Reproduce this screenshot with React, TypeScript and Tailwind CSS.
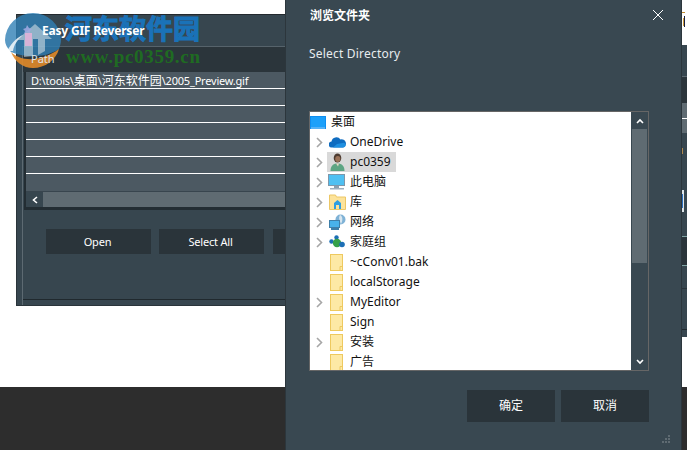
import React from "react";

const cjk = "font-['Noto_Sans','Noto_Sans_CJK_SC',sans-serif]";

function Chevron({ show }: { show: boolean }) {
  return (
    <span className="flex w-[16px] shrink-0 justify-center">
      {show && (
        <svg width="7" height="11" viewBox="0 0 7 11" fill="none">
          <path d="M1 1l4.5 4.5L1 10" stroke="#a6a6a6" strokeWidth="1.6" />
        </svg>
      )}
    </span>
  );
}

function FolderIcon() {
  return (
    <svg width="14" height="17" viewBox="0 0 14 17">
      <rect x="0.5" y="0.5" width="12" height="16" fill="#fde9a5" stroke="#eec95f" />
      <path d="M10 16.5v-4h3" fill="none" stroke="#eec95f" />
    </svg>
  );
}

function CloudIcon() {
  return (
    <svg width="17" height="12" viewBox="0 0 17 12">
      <path d="M3 11.5a3 3 0 0 1-.5-6A5 5 0 0 1 11.500 3.500a3.800 3.800 0 0 1 2.500 8z" fill="#0f6cc0" />
      <path d="M4 11.500h10.500a2.400 2.400 0 0 0 .5-4.700L8 8z" fill="#1f8fe0" />
    </svg>
  );
}

function UserIcon() {
  return (
    <svg width="15" height="18" viewBox="0 0 15 18">
      <ellipse cx="7.500" cy="5" rx="3.800" ry="4.500" fill="#4d3b30" />
      <ellipse cx="7.800" cy="6" rx="2.600" ry="3" fill="#9a7258" />
      <path d="M0.500 18c0-5 2.500-7.500 7-7.500s7 2.500 7 7.500z" fill="#5da583" />
      <path d="M6 10.500h3l-1 3z" fill="#e9d8c6" />
    </svg>
  );
}

function MonitorIcon() {
  return (
    <svg width="18" height="16" viewBox="0 0 18 16">
      <rect x="0.500" y="0.500" width="16" height="11" fill="#4fc0f2" stroke="#7f97aa" />
      <rect x="6" y="12" width="5" height="2" fill="#8ba0b0" />
      <rect x="2" y="14" width="14" height="1.500" fill="#9db0c0" />
    </svg>
  );
}

function LibraryIcon() {
  return (
    <svg width="17" height="16" viewBox="0 0 17 16">
      <path d="M0.500 1h6l1 2h9v12.500H.5z" fill="#fde39a" stroke="#ecc766" />
      <path d="M5 9l3.500-3L12 9v6H5z" fill="#2f9fe2" />
      <rect x="7" y="11" width="3" height="4" fill="#fde39a" />
    </svg>
  );
}

function NetworkIcon() {
  return (
    <svg width="17" height="17" viewBox="0 0 17 17">
      <circle cx="11.500" cy="5.500" r="5" fill="#7fb2d6" />
      <path d="M11 1c3 1 3 6 1 9-1-3-3-6-1-9z" fill="#d8e6ef" />
      <rect x="0.500" y="6.500" width="10" height="7" fill="#49b2ea" stroke="#3f7fa8" />
      <rect x="2" y="14" width="8" height="2" fill="#3f7fa8" />
    </svg>
  );
}

function HomegroupIcon() {
  return (
    <svg width="16" height="14" viewBox="0 0 16 14">
      <circle cx="2.500" cy="6.500" r="2.200" fill="#1d6fb5" />
      <circle cx="7.500" cy="2.500" r="2.200" fill="#1d6fb5" />
      <circle cx="8" cy="8" r="4.200" fill="#35a04a" />
      <circle cx="13" cy="9.500" r="2.800" fill="#1d6fb5" />
    </svg>
  );
}

function DesktopIcon() {
  return (
    <svg width="16" height="13" viewBox="0 0 16 13">
      <rect width="16" height="13" fill="#0f8ef0" />
      <rect x="1" y="1" width="14" height="10" fill="#1ca0fa" />
      <rect x="1" y="11.500" width="14" height="1" fill="#9fd6fb" />
    </svg>
  );
}

const tree = [
  { icon: <CloudIcon />, label: "OneDrive", arrow: true },
  { icon: <UserIcon />, label: "pc0359", arrow: true, selected: true },
  { icon: <MonitorIcon />, label: "此电脑", arrow: true },
  { icon: <LibraryIcon />, label: "库", arrow: true },
  { icon: <NetworkIcon />, label: "网络", arrow: true },
  { icon: <HomegroupIcon />, label: "家庭组", arrow: true },
  { icon: <FolderIcon />, label: "~cConv01.bak", arrow: false },
  { icon: <FolderIcon />, label: "localStorage", arrow: false },
  { icon: <FolderIcon />, label: "MyEditor", arrow: true },
  { icon: <FolderIcon />, label: "Sign", arrow: false },
  { icon: <FolderIcon />, label: "安装", arrow: true },
  { icon: <FolderIcon />, label: "广告", arrow: false },
];

function GifWindow() {
  return (
    <div className={`absolute left-[16px] top-[14px] flex h-[292px] w-[269px] flex-col border-b border-l border-[#2a343a] bg-[#37464f] ${cjk}`}>
      <div className="flex h-[32px] items-center border-t border-[#23292e] pl-[25px] text-[12px] font-bold tracking-[-0.2px] text-white">
        <span className="relative z-10">Easy GIF Reverser</span>
      </div>
      <div className="ml-[5px] flex grow flex-col border-l border-[#5d6a72]">
        <div className="flex h-[26px] items-center border-t border-[#56636b] bg-[#2b353b] pl-[8px] text-[11px] text-[#dfe3e6]">
          <span className="relative z-10">Path</span>
        </div>
        <div className="ml-[1px] flex flex-col border-b-[3px] border-l-[2px] border-[#232d33] bg-[#4c5962]">
          <div className="h-[17px] border-b border-white pl-[5px] text-[11px] leading-[17px] tracking-[-0.2px] text-white">
            D:\tools\<span className="text-[12px] tracking-normal">桌面</span>\<span className="text-[12px] tracking-normal">河东软件园</span>\2005_Preview.gif
          </div>
          {[0, 1, 2, 3, 4].map((i) => (
            <div key={i} className="h-[17px] border-b border-white" />
          ))}
          <div className="h-[17px]" />
          <div className="flex h-[16px] border-t border-[#38454e]">
            <div className="flex w-[17px] items-center justify-center bg-[#37464f]">
              <svg width="6" height="8" viewBox="0 0 6 8" fill="none">
                <path d="M5 1L1.500 4 5 7" stroke="#fff" strokeWidth="1.600" />
              </svg>
            </div>
            <div className="grow bg-[#5f6b72]" />
          </div>
        </div>
        <div className="flex gap-[8px] pl-[23px] pt-[19px] text-[11px] tracking-[-0.2px] text-white">
          <button className="h-[25px] w-[105px] shrink-0 bg-[#2a343a] pr-[2px] pt-[1px]">Open</button>
          <button className="h-[25px] w-[105px] shrink-0 bg-[#2a343a] pr-[2px] pt-[1px]">Select All</button>
          <div className="ml-[1px] h-[25px] grow bg-[#2a343a]" />
        </div>
        <div className="mt-auto h-[6px] border-t border-[#20292e] bg-[#37464f]" />
      </div>
    </div>
  );
}

function BrowseDialog() {
  return (
    <div className={`absolute left-[285px] top-0 flex h-[450px] w-[397px] flex-col border-x border-[#2c363c] bg-[#394851] ${cjk}`}>
      <div className="flex items-start justify-between pl-[24px] pr-[17px] pt-[8px]">
        <span className="text-[12px] font-bold leading-[16px] text-white">浏览文件夹</span>
        <svg className="mt-[1px]" width="12" height="12" viewBox="0 0 12 12" fill="none">
          <path d="M1 1l10 10M11 1L1 11" stroke="#fff" strokeWidth="1" />
        </svg>
      </div>
      <div className="pl-[23px] pt-[22px] text-[12px] leading-[16px] tracking-[0.2px] text-[#e8ecef]">Select Directory</div>
      <div className="ml-[23px] mt-[49px] flex h-[260px] w-[340px] border border-[#666] bg-white">
        <div className="flex grow flex-col overflow-hidden text-[12px] text-[#111]">
          <div className="flex h-[20px] shrink-0 items-center gap-[5px]">
            <DesktopIcon />
            <span>桌面</span>
          </div>
          {tree.map((row) => (
            <div key={row.label} className="flex h-[20px] shrink-0 items-center pl-[1px]">
              <Chevron show={row.arrow} />
              <div className={row.selected ? "flex h-[20px] w-[69px] items-center bg-[#d9d9d9]" : "flex items-center"}>
                <span className="flex w-[20px] shrink-0 justify-center">{row.icon}</span>
                <span className="pl-[3px]">{row.label}</span>
              </div>
            </div>
          ))}
        </div>
        <div className="flex w-[17px] shrink-0 flex-col bg-[#394851]">
          <div className="flex h-[17px] items-center justify-center">
            <svg width="8" height="6" viewBox="0 0 8 6" fill="none">
              <path d="M1 5l3-3 3 3" stroke="#fff" strokeWidth="1.600" />
            </svg>
          </div>
          <div className="mx-[1px] h-[134px] bg-[#5f6b72]" />
          <div className="mt-auto flex h-[17px] items-center justify-center">
            <svg width="8" height="6" viewBox="0 0 8 6" fill="none">
              <path d="M1 1l3 3 3-3" stroke="#fff" strokeWidth="1.600" />
            </svg>
          </div>
        </div>
      </div>
      <div className="ml-[181px] mt-[19px] flex gap-[6px] text-[12px] text-white">
        <button className="h-[32px] w-[88px] bg-[#2a343a]">确定</button>
        <button className="h-[32px] w-[88px] bg-[#2a343a]">取消</button>
      </div>
      <svg className="absolute bottom-[6px] right-[10px]" width="9" height="9" viewBox="0 0 9 9" fill="#5f6b72">
        <rect x="6" y="0" width="2" height="2" />
        <rect x="3" y="3" width="2" height="2" />
        <rect x="6" y="3" width="2" height="2" />
        <rect x="0" y="6" width="2" height="2" />
        <rect x="3" y="6" width="2" height="2" />
        <rect x="6" y="6" width="2" height="2" />
      </svg>
    </div>
  );
}

// sliver of another window behind the dialog
function RightStrip() {
  return (
    <>
      <svg className="absolute left-[682px] top-[10px]" width="5" height="20" viewBox="0 0 5 20">
        <rect x="0" y="2" width="3" height="1" fill="#c08a30" />
        <rect x="2" y="6" width="1" height="11" fill="#1a2040" />
        <rect x="1" y="8" width="1" height="8" fill="#d0a040" />
      </svg>
      <div className="absolute left-[682px] top-[45px] flex h-[292px] w-[5px] flex-col bg-[#37464f]">
        <div className="h-[32px] border-b border-[#5d6a72]" />
        <div className="h-[26px] bg-[#2b353b]" />
        <div className="h-[16px] border-b border-white bg-[#5f6b72]" />
        <div className="h-[14px] bg-[#5f6b72]" />
        <div className="h-[103px]" />
        <div className="h-[30px] border-y border-[#7fa3a3] bg-[#2a343a]" />
        <div className="h-[23px] border-b border-[#2a343a]" />
        <div className="h-[41px] border-b border-[#20292e]" />
      </div>
      <svg className="absolute left-[682px] top-[148px]" width="5" height="70" viewBox="0 0 5 70">
        <rect x="0" y="0" width="1" height="6" fill="#b08a50" />
        <rect x="0" y="42" width="2" height="22" fill="#dfe6ea" />
        <rect x="0" y="46" width="1" height="14" fill="#2a6fc0" />
      </svg>
    </>
  );
}

function Watermark() {
  return (
    <>
      <svg className="absolute left-[5px] top-[13px] z-[5]" width="58" height="56" viewBox="0 0 58 56">
        <path d="M28 0a28 28 0 0 1 28 27c0 3-1 6-2 9-12 8-30 10-48 3C2 35 0 31 0 27A28 28 0 0 1 28 0z" fill="#2f7fb5" opacity="0.8" />
        <path d="M6 39c10 10 30 10 48-3-3 11-14 19-26 19C18 55 10 49 6 39z" fill="#e08a2a" opacity="0.9" />
        <path d="M19 44V27h-7l18-16 17 15h-7v12l-7 4V26h-5v17z" fill="#dfe6ea" opacity="0.55" />
        <path d="M2 38C8 28 13 24 18 22 12 27 9 32 8 38z" fill="#ffffff" opacity="0.8" />
        <path d="M22 12l2 3 3 1-2 2v3l-3-2-3 2 1-3-2-2 3-1z" fill="#9fa8e0" opacity="0.9" />
        <rect x="20" y="20" width="7" height="13" fill="#e5b2d8" opacity="0.85" />
      </svg>
      <div className={`absolute left-[65px] top-[11px] z-[6] text-[27px] font-bold leading-[36px] text-[#1a72b8] [-webkit-text-stroke:1px_#1a72b8] ${cjk}`}>
        河东软件园
      </div>
      <div className="absolute left-[66px] top-[46px] z-[6] font-['Liberation_Serif',serif] text-[19px] font-bold leading-[22px] tracking-[0.7px] text-[#1f6b22]">
        www.pc0359.cn
      </div>
    </>
  );
}

export default function App() {
  return (
    <div className="relative h-[450px] w-[687px] overflow-hidden bg-white">
      <div className="absolute inset-x-0 bottom-0 h-[63px] bg-[#2d2d2d]" />
      <GifWindow />
      <BrowseDialog />
      <RightStrip />
      <Watermark />
    </div>
  );
}
